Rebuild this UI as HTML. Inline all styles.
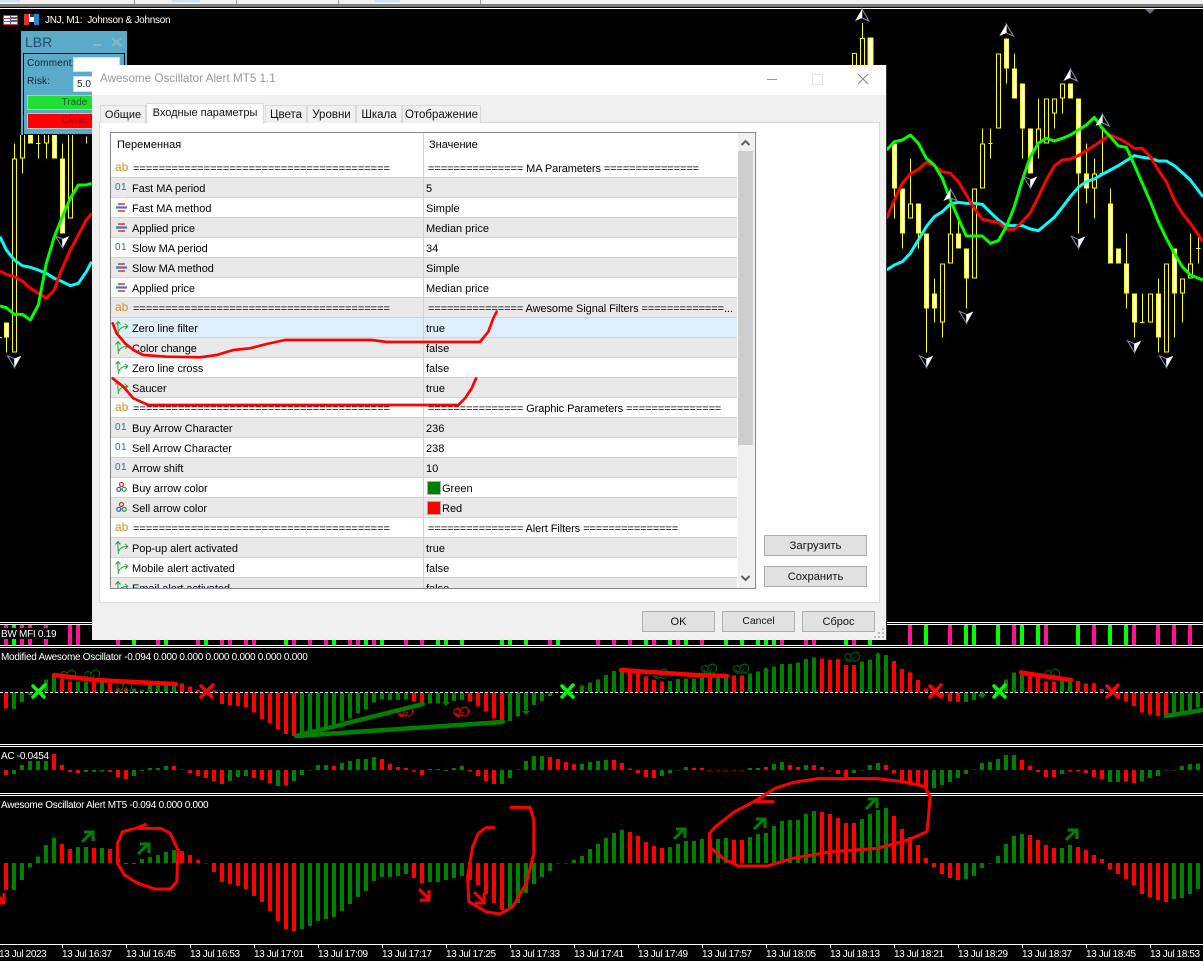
<!DOCTYPE html>
<html><head><meta charset="utf-8"><title>Awesome Oscillator Alert MT5</title>
<style>
html,body{margin:0;padding:0;background:#000;width:1203px;height:961px;overflow:hidden}
body{position:relative;font-family:"Liberation Sans","Noto Sans CJK SC",sans-serif;font-size:11px;color:#000}
.a{position:absolute}
#chart{position:absolute;left:0;top:0;z-index:0}
#chart text{font-family:"Liberation Sans",sans-serif;font-size:10px;fill:#fff;letter-spacing:-.28px}
#chart text.t{letter-spacing:-.4px}
#lbr{position:absolute;left:21px;top:31px;width:106px;height:104px;background:#5aabc9;z-index:1;font-size:10px;color:#123}
#dlg{position:absolute;left:92px;top:65px;width:794px;height:575px;background:#f0f0f0;z-index:2;box-shadow:1px 0 0 #333}
#tb{position:absolute;left:0;top:0;width:794px;height:30px;background:#fff}
#tb span{position:absolute;left:8px;top:7px;font-size:11.7px;color:#999}
.tab{position:absolute;top:40px;height:17px;background:#f0f0f0;border:1px solid #d9d9d9;border-bottom:0;font-size:11.5px;text-align:center;line-height:18px;color:#111;box-sizing:content-box}
#panel{position:absolute;left:7px;top:57px;width:779px;height:479px;background:#fff;border:1px solid #d9d9d9}
#list{position:absolute;left:18px;top:67px;width:644px;height:455px;border:1px solid #828790;background:#fff;overflow:hidden}
.r{position:absolute;left:0;width:626px;height:19px;border-bottom:1px solid #d2d2d2;line-height:19px;white-space:nowrap;background:#fff}
.g{background:#e9e9e9}
.n{position:absolute;left:21px;top:2px;width:290px;overflow:hidden;letter-spacing:-.05px}
.v{position:absolute;left:315px;top:2px;width:311px;overflow:hidden}
.i{position:absolute;left:3px;top:2px;width:15px;height:15px}
.ab{position:absolute;left:4px;top:0;color:#c8922a;font-size:12px}
.o1{position:absolute;left:4px;top:0;color:#2a6fa8;font-size:10px;letter-spacing:.4px}
.eq{left:22px;letter-spacing:0}
.eqv{left:317px;letter-spacing:-.08px}
#sep{position:absolute;left:312px;top:0;width:1px;height:455px;background:#d0d0d0}
.btn{position:absolute;background:#e1e1e1;border:1px solid #adadad;box-sizing:border-box;text-align:center;font-size:11px;line-height:20px;color:#111}
#ann{position:absolute;left:0;top:0;z-index:3;pointer-events:none}
</style></head>
<body>
<svg id="chart" width="1203" height="961" viewBox="0 0 1203 961">
<defs>
<g id="ad"><polygon points="-21,-18 1,18 0,-9" fill="#000" stroke="#8494a8" stroke-width="3"/><polygon points="0,-9 21,-18 1,18" fill="#fff"/></g>
<g id="au"><polygon points="0,-18 21,18 0,9" fill="#000" stroke="#8494a8" stroke-width="3"/><polygon points="0,-18 -21,18 0,9" fill="#fff"/></g>
<g id="sq" fill="none" stroke-width="1.1"><path d="M1 7C0 2 6 1 7 5S3 10 3 7M7 5C8 1 13 0 15 3S14 11 10 10C8 9 9 6 11 7M1 7C3 11 6 11 8 9"/></g>
</defs>
<rect width="1203" height="961" fill="#000"/>
<!-- top toolbar remnant -->
<rect x="0" y="0" width="1203" height="4" fill="#f0f0f0"/>
<rect x="0" y="4" width="1203" height="3" fill="#7a7a7a"/>
<rect x="0" y="8" width="1203" height="1" fill="#fff"/>
<rect x="0" y="0" width="20" height="2" fill="#c8e0f4"/><rect x="172" y="0" width="28" height="2" fill="#c8e0f4"/><rect x="375" y="0" width="25" height="2" fill="#c8e0f4"/>
<path d="M134.5 0V4M236.5 0V4M338.5 0V4M480.5 0V4" stroke="#999"/>
<polygon points="1145,9 1155,9 1150,14" fill="#6a7080"/>
<!-- header icons -->
<rect x="3.500" y="15.500" width="14" height="9" fill="#fff" stroke="#e03030"/><path d="M4 18.500H17M4 21.500H17" stroke="#e03030"/><path d="M10.500 16V24" stroke="#2a60c0"/><rect x="11" y="17" width="6" height="1" fill="#2a60c0"/><rect x="11" y="20" width="6" height="1" fill="#2a60c0"/>
<rect x="24" y="14" width="5" height="11" fill="#e03030"/><rect x="29" y="14" width="5" height="8" fill="#fff"/><rect x="34" y="14" width="5" height="11" fill="#2a7fd0"/><rect x="30" y="14" width="4" height="3" fill="#333"/>
<text x="45" y="23" xml:space="preserve">JNJ, M1:  Johnson &amp; Johnson</text>

<!-- candles right -->
<g transform="translate(880 0) scale(.33333)" shape-rendering="crispEdges" fill="none">
<path stroke="#ff0" stroke-width="3" d="M43 430V655M67 565V745M91 475V610M115 610V745M139 925V1058M163 835V968M187 968V1013M211 600V700M235 655V700M259 835V925M307 385V430M331 385V475M325 430H338M379 205V250M403 160V205M427 385V475M475 295V475M523 340V385M547 295V340M595 520V700M619 430V610M643 475V655M667 385V520M660 520H674M691 565V610M739 700V925M763 968V1013M787 880V968M780 968H794M835 835V1058M883 880V1013M907 880V968M931 700V790M955 700V790M948 745H962M19 295V430"/>
<path stroke="#ff0" stroke-width="15" d="M43 430V565M67 565V700M115 610V700M139 700V925M163 880V925M235 700V745M259 745V835M379 115V205M403 205V295M427 250V385M451 385V520M571 250V295M595 295V520M619 520V565M691 610V790M715 745V790M739 790V880M763 880V968M835 880V1013M883 745V880M91 610V655M187 790V968M211 700V790M283 565V835M307 430V565M355 160V385M475 385V430M499 295V430M523 295V340M547 250V295M643 520V565M811 880V968M859 790V1058M907 835V880M931 790V835"/>
<path stroke="#fff" stroke-width="9" d="M43 433V562M67 568V697M115 613V697M139 703V922M163 883V922M235 703V742M259 748V832M379 118V202M403 208V292M427 253V382M451 388V517M571 253V292M595 298V517M619 523V562M691 613V787M715 748V787M739 793V877M763 883V965M835 883V1010M883 748V877"/>
<path stroke="#000" stroke-width="9" d="M91 613V652M187 793V965M211 703V787M283 568V832M307 433V562M355 163V382M475 388V427M499 298V427M523 298V337M547 253V292M643 523V562M811 883V965M859 793V1055M907 838V877M931 793V832"/>
</g>
<!-- candles top near 862 -->
<g shape-rendering="crispEdges" fill="none">
<path stroke="#ff0" d="M862.500 23V38"/>
<rect x="852.500" y="53.500" width="4" height="14" stroke="#ff0"/>
<rect x="860.500" y="38.500" width="4" height="30" stroke="#ff0"/>
<rect x="868" y="38" width="5" height="30" fill="#fff" stroke="#ff0"/>
</g>
<!-- candles left -->
<g transform="scale(.33333)" shape-rendering="crispEdges" fill="none">
<path stroke="#ff0" stroke-width="3" d="M19 1012V1058M43 430V475M67 475V520M115 405V475M108 430H122M139 430V475M187 430V475M259 410V430M0 1012H6M205 405V450"/>
<path stroke="#ff0" stroke-width="15" d="M19 967V1012M91 405V430M163 405V475M187 475V700M43 475V1058M67 405V475M139 405V430M211 405V655"/>
<path stroke="#fff" stroke-width="9" d="M19 970V1009M91 405V427M163 405V472M187 478V697"/>
<path stroke="#000" stroke-width="9" d="M43 478V1055M67 405V472M139 405V427M211 405V652"/>
</g>
<!-- MA lines right -->
<g transform="translate(880 0) scale(.33333)" fill="none" stroke-width="9" stroke-linejoin="round">
<polyline stroke="#00ffff" points="20,810 43,795 67,785 91,760 115,720 139,680 163,650 187,635 211,612 235,607 259,610 283,610 307,613 331,637 355,660 379,677 403,677 427,677 451,687 475,692 499,672 523,652 547,622 571,590 595,562 619,545 643,537 667,523 691,510 715,497 739,482 763,467 787,472 811,475 835,483 859,483 883,497 907,518 931,540 969,590"/>
<polyline stroke="#ff0000" points="20,655 43,600 67,550 91,522 115,508 139,487 163,497 187,515 211,520 235,545 259,585 283,625 307,658 331,663 355,667 379,688 403,688 427,665 451,638 475,590 499,540 523,498 547,480 571,477 595,467 619,452 643,437 667,420 691,405 715,415 739,428 763,445 787,445 811,470 835,510 859,545 883,600 907,640 931,670 969,725"/>
<polyline stroke="#00ff00" points="20,450 43,425 67,420 91,405 115,430 139,475 163,495 187,535 211,600 235,655 259,708 283,708 307,708 331,730 355,722 379,680 403,620 427,540 451,470 475,430 499,415 523,423 547,415 571,405 595,390 619,375 643,352 667,385 691,410 715,438 739,442 763,495 787,550 811,605 835,665 859,715 883,760 907,800 931,825 969,840"/>
</g>
<!-- MA lines left -->
<g transform="translate(0 130) scale(.33333)" fill="none" stroke-width="9" stroke-linejoin="round">
<polyline stroke="#00ffff" points="0,320 19,360 43,390 67,407 91,412 115,420 139,430 163,445 187,455 211,467 235,460 259,425 275,395"/>
<polyline stroke="#ff0000" points="0,423 19,433 43,440 67,453 91,475 115,490 139,505 163,480 180,430 211,360 235,315 259,270 275,250"/>
<polyline stroke="#00ff00" points="0,528 19,533 43,553 67,553 91,570 115,525 139,400 163,320 187,260 211,205 235,165 259,165 275,160"/>
</g>
<!-- fractal arrows -->
<g transform="translate(880 0) scale(.33333)">
<use href="#ad" x="139" y="1085"/><use href="#ad" x="259" y="952"/><use href="#ad" x="451" y="547"/><use href="#ad" x="595" y="727"/><use href="#ad" x="763" y="1040"/><use href="#ad" x="859" y="1085"/>
<use href="#au" x="379" y="90"/><use href="#au" x="571" y="225"/><use href="#au" x="667" y="360"/><use href="#au" x="211" y="585"/>
</g>
<g transform="scale(.33333)">
<use href="#ad" x="43" y="1085"/><use href="#ad" x="187" y="726"/><use href="#au" x="2586" y="45"/>
</g>

<!-- panel separators -->
<g fill="#fff" shape-rendering="crispEdges">
<rect x="0" y="622" width="1203" height="1"/><rect x="0" y="624" width="1203" height="1"/>
<rect x="0" y="645" width="1203" height="1"/><rect x="0" y="647" width="1203" height="1"/>
<rect x="0" y="744" width="1203" height="1"/><rect x="0" y="746" width="1203" height="1"/>
<rect x="0" y="793" width="1203" height="1"/><rect x="0" y="795" width="1203" height="1"/>
<rect x="0" y="944" width="1203" height="1"/>
</g>
<!-- BW MFI -->
<g shape-rendering="crispEdges" stroke-width="4" fill="none">
<path stroke="#ff1493" d="M6 625V645M22 625V645M30 625V645M46 625V645M70 625V645M78 625V645M118 625V645M158 625V645M198 625V645M222 625V645M230 625V645M246 625V645M254 625V645M294 625V645M310 625V645M326 625V645M350 625V645M358 625V645M374 625V645M406 625V645M422 625V645M550 625V645M598 625V645M614 625V645M630 625V645M654 625V645M678 625V645M702 625V645M782 625V645M806 625V645M814 625V645M854 625V645M910 625V645M950 625V645M1014 625V645M1046 625V645M1094 625V645M1134 625V645M1158 625V645M1174 625V645M1190 625V645"/>
<path stroke="#00ff00" d="M14 625V645M134 625V645M166 625V645M206 625V645M286 625V645M334 625V645M366 625V645M382 625V645M438 625V645M446 625V645M462 625V645M502 625V645M510 625V645M526 625V645M558 625V645M646 625V645M670 625V645M686 625V645M726 625V645M742 625V645M758 625V645M766 625V645M774 625V645M846 625V645M870 625V645M926 625V645M966 625V645M974 625V645M998 625V645M1022 625V645M1038 625V645M1078 625V645M1110 625V645M1126 625V645"/>
</g>
<rect x="0" y="628" width="59" height="11" fill="#000"/>
<text x="1" y="637">BW MFI 0.19</text>

<!-- Modified AO -->
<g transform="translate(0 620) scale(1 .33333)" shape-rendering="crispEdges" stroke-width="4" fill="none">
<path stroke="#ff0000" d="M6 217V265M62 217V175M70 217V185M94 217V185M110 217V190M118 217V205M126 217V205M182 217V190M190 217V200M198 217V210M214 217V212M222 217V252M230 217V255M238 217V258M246 217V262M254 217V278M262 217V297M270 217V310M278 217V328M286 217V342M294 217V348M414 217V245M422 217V255M470 217V245M478 217V260M486 217V275M494 217V295M502 217V305M630 217V150M638 217V150M646 217V170M654 217V180M662 217V185M710 217V165M734 217V167M742 217V167M822 217V116M830 217V120M838 217V118M846 217V135M854 217V135M894 217V123M902 217V147M910 217V157M918 217V180M926 217V205M942 217V233M950 217V243M958 217V246M1030 217V165M1038 217V173M1046 217V185M1054 217V185M1078 217V183M1086 217V190M1094 217V190M1102 217V207M1110 217V228M1118 217V236M1126 217V245M1134 217V258M1142 217V277M1150 217V283M1158 217V288M1166 217V290"/>
<path stroke="#008000" d="M14 217V267M22 217V246M30 217V225M46 217V178M54 217V162M78 217V185M86 217V185M102 217V185M134 217V205M142 217V210M150 217V195M158 217V195M166 217V195M174 217V195M302 217V340M310 217V335M318 217V325M326 217V320M334 217V315M342 217V303M350 217V295M358 217V280M366 217V268M374 217V248M382 217V238M390 217V240M398 217V240M406 217V238M430 217V250M438 217V250M446 217V250M454 217V243M462 217V240M510 217V303M518 217V290M526 217V272M534 217V255M542 217V243M550 217V228M582 217V197M590 217V187M598 217V178M606 217V165M614 217V153M622 217V150M670 217V183M678 217V177M686 217V175M694 217V175M702 217V170M718 217V165M726 217V165M750 217V160M758 217V155M766 217V145M774 217V140M782 217V132M790 217V132M798 217V128M806 217V117M814 217V113M862 217V125M870 217V118M878 217V100M886 217V105M966 217V246M974 217V240M982 217V226M1006 217V178M1014 217V158M1022 217V160M1062 217V183M1070 217V185M1174 217V285M1182 217V277M1190 217V270M1198 217V262"/>
</g>
<path d="M0 692.500H1203" stroke="#fff" stroke-dasharray="3 2" shape-rendering="crispEdges"/>
<!-- small caps -->
<g fill="#ff0000"><polygon points="646,676 643,680 649,680"/><polygon points="838,658 835,662 841,662"/><polygon points="910,671 907,675 913,675"/><polygon points="1094,682 1091,686 1097,686"/></g>
<g fill="#008000"><polygon points="766,667 763,671 769,671"/><polygon points="878,652 875,656 881,656"/><polygon points="446,706 442,702 450,702"/><polygon points="526,715 522,711 530,711"/><polygon points="982,692 978,695 982,698 986,695"/></g>
<!-- squiggles -->
<g stroke="#006400">
<use href="#sq" x="60" y="669"/><use href="#sq" x="84" y="669"/><use href="#sq" x="116" y="681"/><use href="#sq" x="652" y="668"/><use href="#sq" x="701" y="663"/><use href="#sq" x="733" y="663"/><use href="#sq" x="844" y="651"/><use href="#sq" x="1044" y="668"/>
</g>
<g stroke="#ff0000"><use href="#sq" x="397" y="706"/><use href="#sq" x="453" y="706"/></g>
<!-- hand lines -->
<g stroke-linecap="round" fill="none">
<path stroke="#ff0000" stroke-width="4.500" d="M54 675L95 680L155 683L176 684M621 670L650 672L695 675L727 676M1021 672.500L1050 677L1071 680"/>
<path stroke="#008000" stroke-width="4.500" d="M296 736L423 704M296 736L503 722M1166 716L1203 710"/>
<path stroke="#00ff00" stroke-width="3.500" d="M33 686L44 697M45 685L33 697M562 686L573 697M573 685L562 697M994 686L1005 697M1005 685L994 697"/>
<path stroke="#ff0000" stroke-width="3.500" d="M201 686L212 697M213 685L201 697M930 686L941 697M941 685L930 697M1107 686L1118 697M1118 685L1107 697"/>
</g>
<text x="1" y="660">Modified Awesome Oscillator -0.094 0.000 0.000 0.000 0.000 0.000 0.000</text>

<!-- AC -->
<g transform="translate(0 620) scale(1 .33333)" shape-rendering="crispEdges" stroke-width="4" fill="none">
<path stroke="#ff0000" d="M6 450V465M54 450V402M62 450V435M70 450V456M78 450V459M110 450V456M118 450V472M126 450V477M174 450V438M182 450V448M190 450V459M198 450V468M206 450V474M214 450V483M222 450V492M254 450V474M262 450V480M270 450V489M286 450V495M334 450V438M382 450V417M390 450V432M398 450V441M406 450V444M414 450V455M422 450V465M470 450V453M478 450V468M486 450V483M494 450V492M550 450V411M558 450V417M566 450V426M574 450V432M614 450V420M622 450V429M630 450V445M638 450V459M646 450V471M654 450V474M694 450V444M702 450V444M710 450V452M718 450V452M726 450V452M734 450V452M742 450V452M766 450V441M790 450V435M798 450V441M814 450V435M822 450V441M830 450V452M838 450V462M846 450V471M886 450V435M894 450V459M902 450V490M910 450V495M918 450V500M926 450V505M1022 450V420M1030 450V438M1038 450V456M1046 450V471M1054 450V471M1070 450V453M1078 450V453M1086 450V459M1094 450V471M1102 450V477M1126 450V484M1134 450V489"/>
<path stroke="#008000" d="M14 450V462M22 450V435M30 450V423M38 450V423M46 450V423M86 450V456M94 450V456M102 450V454M134 450V468M142 450V453M150 450V444M158 450V444M166 450V438M230 450V483M238 450V471M246 450V468M278 450V498M294 450V483M302 450V465M310 450V452M318 450V435M326 450V435M342 450V429M350 450V423M358 450V417M366 450V417M374 450V411M430 450V447M438 450V447M446 450V453M454 450V444M462 450V438M502 450V492M510 450V474M518 450V448M526 450V423M534 450V408M542 450V408M582 450V432M590 450V426M598 450V423M606 450V420M662 450V468M670 450V459M678 450V452M686 450V441M750 450V444M758 450V444M774 450V432M782 450V426M806 450V435M854 450V459M862 450V452M870 450V435M878 450V429M934 450V504M942 450V495M950 450V486M958 450V474M966 450V462M974 450V448M982 450V429M990 450V426M998 450V417M1006 450V405M1014 450V405M1062 450V462M1110 450V486M1118 450V486M1142 450V484M1150 450V474M1158 450V468M1166 450V452M1174 450V452M1182 450V438M1190 450V432M1198 450V430"/>
</g>
<rect x="0" y="750" width="51" height="11" fill="#000"/>
<text x="1" y="759">AC -0.0454</text>

<!-- Awesome Oscillator Alert -->
<g transform="translate(0 790) scale(1 .33333)" shape-rendering="crispEdges" stroke-width="4" fill="none">
<path stroke="#ff0000" d="M6 219V300M62 219V162M70 219V177M94 219V174M110 219V177M118 219V203M126 219V222M182 219V183M190 219V195M198 219V210M206 219V221M214 219V246M222 219V276M230 219V282M238 219V288M246 219V297M254 219V318M262 219V336M270 219V363M278 219V393M286 219V417M294 219V423M414 219V264M422 219V279M470 219V270M478 219V285M486 219V312M494 219V339M502 219V360M630 219V126M638 219V138M646 219V156M654 219V168M662 219V174M710 219V147M734 219V150M742 219V150M822 219V66M830 219V72M838 219V84M846 219V99M854 219V99M894 219V78M902 219V117M910 219V141M918 219V165M926 219V204M934 219V231M942 219V252M950 219V264M958 219V270M1030 219V135M1038 219V150M1046 219V165M1054 219V174M1078 219V171M1086 219V180M1094 219V195M1102 219V207M1110 219V237M1118 219V252M1126 219V267M1134 219V285M1142 219V312M1150 219V321M1158 219V330M1166 219V336"/>
<path stroke="#008000" d="M14 219V300M22 219V270M30 219V232M38 219V200M46 219V165M54 219V144M78 219V171M86 219V171M102 219V174M134 219V222M142 219V207M150 219V201M158 219V195M166 219V186M174 219V180M302 219V417M310 219V408M318 219V393M326 219V387M334 219V381M342 219V363M350 219V342M358 219V321M366 219V303M374 219V273M382 219V261M390 219V261M398 219V258M406 219V252M430 219V276M438 219V276M446 219V270M454 219V264M462 219V258M510 219V354M518 219V339M526 219V309M534 219V282M542 219V261M550 219V243M558 219V221M566 219V221M574 219V210M582 219V198M590 219V177M598 219V162M606 219V144M614 219V129M622 219V120M670 219V171M678 219V162M686 219V153M694 219V153M702 219V147M718 219V147M726 219V144M750 219V141M758 219V132M766 219V129M774 219V108M782 219V93M790 219V90M798 219V90M806 219V72M814 219V63M862 219V87M870 219V72M878 219V60M886 219V54M966 219V267M974 219V258M982 219V234M990 219V221M998 219V198M1006 219V162M1014 219V138M1022 219V132M1062 219V174M1070 219V165M1174 219V327M1182 219V324M1190 219V312M1198 219V297"/>
</g>
<text x="1" y="808">Awesome Oscillator Alert MT5 -0.094 0.000 0.000</text>
<!-- arrows -->
<g fill="none" stroke-width="3">
<g stroke="#008000"><path d="M82 842L92 832M84 832H93V841"/><path d="M138 854L148 844M140 844H149V853"/><path d="M674 839L684 829M676 829H685V838"/><path d="M754 829L764 819M756 819H765V828"/><path d="M866 809L876 799M868 799H877V808"/><path d="M1066 840L1076 830M1068 830H1077V839"/></g>
<g stroke="#ff0000"><path d="M419 889L429 899M429 890V900H420"/><path d="M474 892L484 902M484 893V903H475"/><path d="M-6 892L4 902M4 893V903H-5"/></g>
</g>
<!-- hand circles -->
<g transform="translate(0 790) scale(.3827 .33333)" fill="none" stroke="#ff0000" stroke-linejoin="round" stroke-linecap="round">
<polyline vector-effect="non-scaling-stroke" stroke-width="3" points="380,103 355,115 320,125 307,160 307,220 325,255 360,280 405,297 445,297 462,275 465,180 445,130 420,115 360,115"/>
<polyline vector-effect="non-scaling-stroke" stroke-width="3" points="1335,52 1385,52 1395,90 1395,190 1375,280 1340,350 1305,372 1270,365 1225,335 1222,260 1235,170 1250,130 1270,113 1290,113"/>
</g>
<g transform="translate(600 790) scale(.3846 .33333)" fill="none" stroke="#ff0000" stroke-linejoin="round" stroke-linecap="round">
<polyline vector-effect="non-scaling-stroke" stroke-width="3" points="450,35 400,35 350,65 300,110 285,130 285,170 320,205 360,228 435,228 500,205 600,185 720,175 800,150 850,125 855,70 858,20 845,-10 790,-25 720,-34 565,-34 500,-22 455,-5 400,35"/>
</g>
<!-- time axis -->
<path stroke="#fff" shape-rendering="crispEdges" d="M62.500 944V948M126.500 944V948M190.500 944V948M254.500 944V948M318.500 944V948M382.500 944V948M446.500 944V948M510.500 944V948M574.500 944V948M638.500 944V948M702.500 944V948M766.500 944V948M830.500 944V948M894.500 944V948M958.500 944V948M1022.500 944V948M1086.500 944V948M1150.500 944V948"/>
<text class="t" x="-1" y="957">13 Jul 2023</text><text class="t" x="62" y="957">13 Jul 16:37</text><text class="t" x="126" y="957">13 Jul 16:45</text><text class="t" x="190" y="957">13 Jul 16:53</text><text class="t" x="254" y="957">13 Jul 17:01</text><text class="t" x="318" y="957">13 Jul 17:09</text><text class="t" x="382" y="957">13 Jul 17:17</text><text class="t" x="446" y="957">13 Jul 17:25</text><text class="t" x="510" y="957">13 Jul 17:33</text><text class="t" x="574" y="957">13 Jul 17:41</text><text class="t" x="638" y="957">13 Jul 17:49</text><text class="t" x="702" y="957">13 Jul 17:57</text><text class="t" x="766" y="957">13 Jul 18:05</text><text class="t" x="830" y="957">13 Jul 18:13</text><text class="t" x="894" y="957">13 Jul 18:21</text><text class="t" x="958" y="957">13 Jul 18:29</text><text class="t" x="1022" y="957">13 Jul 18:37</text><text class="t" x="1086" y="957">13 Jul 18:45</text><text class="t" x="1150" y="957">13 Jul 18:53</text>
</svg>

<!-- LBR panel -->
<div id="lbr">
<div class="a" style="left:4px;top:3px;font-size:14px;color:#254b68">LBR</div>
<div class="a" style="left:72px;top:13px;width:8px;height:2px;background:#8fb4c4"></div>
<svg class="a" style="left:90px;top:6px" width="11" height="10"><path d="M1 1L10 9M10 1L1 9" stroke="#8fb4c4" stroke-width="2"/></svg>
<div class="a" style="left:2px;top:22px;width:100px;height:80px;border:1px solid #000"></div>
<div class="a" style="left:6px;top:27px;letter-spacing:.2px">Comment:</div>
<div class="a" style="left:52px;top:26px;width:47px;height:15px;background:#fff;border:1px solid #cfdde3;box-sizing:border-box"></div>
<div class="a" style="left:6px;top:45px;letter-spacing:.2px">Risk:</div>
<div class="a" style="left:52px;top:45px;width:47px;height:16px;background:#fff;border:1px solid #cfdde3;box-sizing:border-box;padding-left:3px;line-height:15px">5.0</div>
<div class="a" style="left:6px;top:64px;width:95px;height:15px;background:#22dd33;border:1px solid #b9c6c9;box-sizing:border-box;text-align:center;line-height:13px;color:#14602a">Trade</div>
<div class="a" style="left:6px;top:82px;width:95px;height:16px;background:#ff0000;border:1px solid #b9c6c9;box-sizing:border-box;text-align:center;line-height:14px;color:#a00000">Close</div>
</div>

<!-- Dialog -->
<div id="dlg">
<div id="tb"><span>Awesome Oscillator Alert MT5 1.1</span>
<div class="a" style="left:675px;top:14px;width:10px;height:1px;background:#999"></div>
<div class="a" style="left:720px;top:9px;width:9px;height:9px;border:1px solid #e2e2e2"></div>
<svg class="a" style="left:765px;top:8px" width="12" height="12"><path d="M1 1L11 11M11 1L1 11" stroke="#8a8a8a" stroke-width="1.100"/></svg>
</div>
<div id="panel"></div>
<div class="tab" style="left:8px;width:44px;font-size:11px">Общие</div>
<div class="tab" style="left:173px;width:40px">Цвета</div>
<div class="tab" style="left:215px;width:47px">Уровни</div>
<div class="tab" style="left:264px;width:44px">Шкала</div>
<div class="tab" style="left:310px;width:77px">Отображение</div>
<div class="tab" style="left:54px;top:38px;width:116px;height:20px;background:#fff;z-index:1;line-height:18px;font-size:11px">Входные параметры</div>

<div id="list">
<svg width="0" height="0" style="position:absolute"><defs>
<g id="ib" fill="none" stroke="#1fa83a" stroke-width="1"><path d="M4.500 14C4 10 3.800 6 4 2M1.500 4.500L4 1.500L6.500 4.500M5 11C6 8.500 7.500 6.500 13.500 6.500M11 3.800L13.800 6.500L11 9"/></g>
<g id="im"><path d="M4 4H11M4 11H11" stroke="#d83030" stroke-width="1.500"/><path d="M2 7.500H13" stroke="#3a78c8" stroke-width="2.200"/></g>
<g id="ic"><circle cx="7.500" cy="4.500" r="2" fill="none" stroke="#d03030" stroke-width="1.200"/><circle cx="4.800" cy="9.300" r="2" fill="none" stroke="#2060b0" stroke-width="1.200"/><circle cx="10.200" cy="9.300" r="2" fill="none" stroke="#2a9040" stroke-width="1.200"/></g>
</defs></svg>
<div class="a" style="left:6px;top:6px">Переменная</div>
<div class="a" style="left:318px;top:6px">Значение</div>
<div class="r" style="top:25px"><span class="ab">ab</span><span class="n eq">========================================</span><span class="v eqv">=============== MA Parameters ===============</span></div>
<div class="r g" style="top:45px"><span class="o1">01</span><span class="n">Fast MA period</span><span class="v">5</span></div>
<div class="r" style="top:65px"><svg class="i"><use href="#im"/></svg><span class="n">Fast MA method</span><span class="v">Simple</span></div>
<div class="r g" style="top:85px"><svg class="i"><use href="#im"/></svg><span class="n">Applied price</span><span class="v">Median price</span></div>
<div class="r" style="top:105px"><span class="o1">01</span><span class="n">Slow MA period</span><span class="v">34</span></div>
<div class="r g" style="top:125px"><svg class="i"><use href="#im"/></svg><span class="n">Slow MA method</span><span class="v">Simple</span></div>
<div class="r" style="top:145px"><svg class="i"><use href="#im"/></svg><span class="n">Applied price</span><span class="v">Median price</span></div>
<div class="r g" style="top:165px"><span class="ab">ab</span><span class="n eq">========================================</span><span class="v eqv">=============== Awesome Signal Filters =============...</span></div>
<div class="r" style="top:185px;background:#dfeefb"><svg class="i"><use href="#ib"/></svg><span class="n">Zero line filter</span><span class="v">true</span></div>
<div class="r g" style="top:205px"><svg class="i"><use href="#ib"/></svg><span class="n">Color change</span><span class="v">false</span></div>
<div class="r" style="top:225px"><svg class="i"><use href="#ib"/></svg><span class="n">Zero line cross</span><span class="v">false</span></div>
<div class="r g" style="top:245px"><svg class="i"><use href="#ib"/></svg><span class="n">Saucer</span><span class="v">true</span></div>
<div class="r" style="top:265px"><span class="ab">ab</span><span class="n eq">========================================</span><span class="v eqv">=============== Graphic Parameters ===============</span></div>
<div class="r g" style="top:285px"><span class="o1">01</span><span class="n">Buy Arrow Character</span><span class="v">236</span></div>
<div class="r" style="top:305px"><span class="o1">01</span><span class="n">Sell Arrow Character</span><span class="v">238</span></div>
<div class="r g" style="top:325px"><span class="o1">01</span><span class="n">Arrow shift</span><span class="v">10</span></div>
<div class="r" style="top:345px"><svg class="i"><use href="#ic"/></svg><span class="n">Buy arrow color</span><span class="v"><i class="a" style="left:1px;top:1px;width:12px;height:12px;background:#008000;border:1px solid #aaa"></i><span style="margin-left:16px">Green</span></span></div>
<div class="r g" style="top:365px"><svg class="i"><use href="#ic"/></svg><span class="n">Sell arrow color</span><span class="v"><i class="a" style="left:1px;top:1px;width:12px;height:12px;background:#ff0000;border:1px solid #aaa"></i><span style="margin-left:16px">Red</span></span></div>
<div class="r" style="top:385px"><span class="ab">ab</span><span class="n eq">========================================</span><span class="v eqv">=============== Alert Filters ===============</span></div>
<div class="r g" style="top:405px"><svg class="i"><use href="#ib"/></svg><span class="n">Pop-up alert activated</span><span class="v">true</span></div>
<div class="r" style="top:425px"><svg class="i"><use href="#ib"/></svg><span class="n">Mobile alert activated</span><span class="v">false</span></div>
<div class="r g" style="top:445px"><svg class="i"><use href="#ib"/></svg><span class="n">Email alert activated</span><span class="v">false</span></div>
<div id="sep"></div>
<div class="a" style="left:627px;top:0;width:17px;height:455px;background:#f0f0f0"></div>
<div class="a" style="left:627px;top:18px;width:15px;height:294px;background:#cdcdcd"></div>
<svg class="a" style="left:629px;top:6px" width="11" height="8"><path d="M1.500 6L5.500 2L9.500 6" fill="none" stroke="#606060" stroke-width="2"/></svg>
<svg class="a" style="left:629px;top:441px" width="11" height="8"><path d="M1.500 2L5.500 6L9.500 2" fill="none" stroke="#606060" stroke-width="2"/></svg>
</div>

<div class="btn" style="left:672px;top:470px;width:103px;height:21px;font-size:11.4px">Загрузить</div>
<div class="btn" style="left:672px;top:501px;width:103px;height:21px;font-size:11.2px">Сохранить</div>
<div class="btn" style="left:550px;top:546px;width:73px;height:21px">OK</div>
<div class="btn" style="left:630px;top:546px;width:73px;height:21px;font-size:10.4px">Cancel</div>
<div class="btn" style="left:710px;top:546px;width:73px;height:21px">Сброс</div>
<svg class="a" style="left:780px;top:561px" width="13" height="13"><path d="M10 2h2v2h-2zM6 6h2v2H6zM10 6h2v2h-2zM2 10h2v2H2zM6 10h2v2H6zM10 10h2v2h-2z" fill="#bcbcbc"/></svg>
</div>

<!-- hand annotation over dialog -->
<svg id="ann" width="1203" height="961">
<g transform="translate(100 290) scale(.33333)" fill="none" stroke="#ff0000" stroke-width="8" stroke-linejoin="round" stroke-linecap="round">
<polyline points="38,100 50,130 75,160 100,180 130,195 200,200 300,202 350,195 400,180 450,175 500,162 555,150 815,150 860,156 1140,156 1165,125 1180,85 1190,65"/>
<polyline points="38,265 70,290 100,325 145,345 1075,345 1095,325 1115,295 1128,265"/>
</g>
</svg>
</body></html>
